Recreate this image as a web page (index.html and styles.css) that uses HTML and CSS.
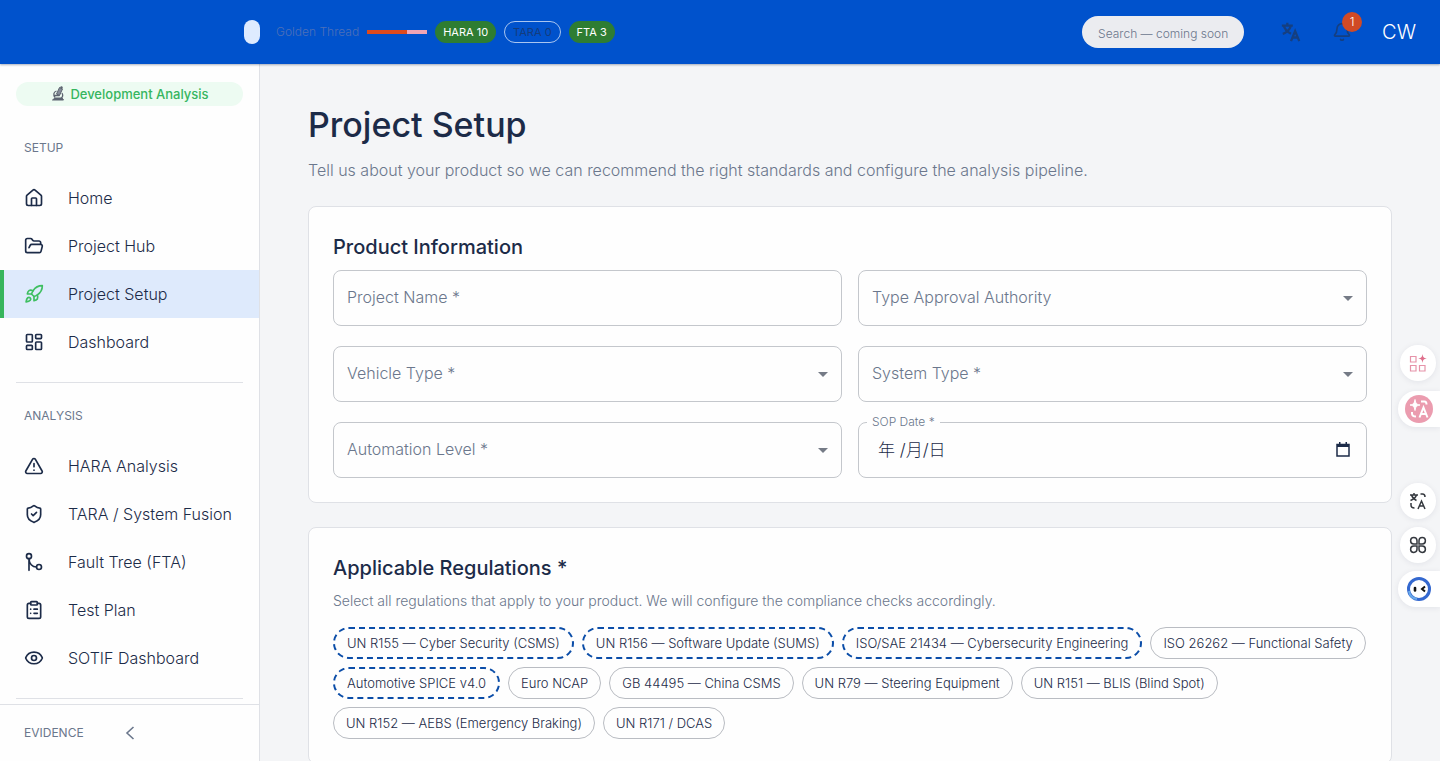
FILE: index.html
```html
<!DOCTYPE html>
<html lang="en">
<head>
<meta charset="utf-8">
<meta name="viewport" content="width=device-width, initial-scale=1">
<title>Project Setup</title>
<link rel="stylesheet" href="styles.css">
</head>
<body>
<div class="app">
  <header class="topbar">
    <div class="thread">
      <span class="thread-toggle"></span>
      <span class="thread-label">Golden Thread</span>
      <span class="thread-bar"><span class="thread-fill"></span></span>
      <span class="tag tag-done">HARA 10</span>
      <span class="tag tag-empty">TARA 0</span>
      <span class="tag tag-done">FTA 3</span>
    </div>
    <div class="tools">
      <input class="search" type="text" aria-label="Search" placeholder="Search — coming soon">
      <button class="tool translate" type="button" aria-label="Language">
        <svg viewBox="0 0 24 24" width="22" height="22" fill="none" stroke="currentColor" stroke-width="2.500"><path d="M2 5h12M8 2v3M4 5c1 4 4 7 8 9M12 5c-1 4-5 8-9 9M12 22l4.500-11 4.500 11M13.500 18h6"/></svg>
      </button>
      <button class="tool bell" type="button" aria-label="Notifications">
        <svg viewBox="0 0 24 24" width="20" height="20" fill="none" stroke="currentColor" stroke-width="2" stroke-linecap="round" stroke-linejoin="round"><path d="M10.300 21a2 2 0 0 0 3.400 0M3.300 15.300A1 1 0 0 0 4 17h16a1 1 0 0 0 .7-1.700C19.400 14 18 12.500 18 8A6 6 0 0 0 6 8c0 4.500-1.400 6-2.700 7.300"/></svg>
        <span class="badge">1</span>
      </button>
      <button class="user" type="button">CW</button>
    </div>
  </header>

  <div class="body">
    <aside class="sidebar">
      <div class="mode">
        <svg viewBox="0 0 16 16" width="16" height="16" fill="none" stroke="#5d6470"><path d="M9.500 1.500l3 1.400-3 6.600-3-1.400z" fill="#858c99"/><path d="M10.500 1l2 1" stroke-width="2"/><path d="M6.500 5C3.500 6 3 9 5 11.500M3.500 9.500h6M12 7c1.500 2.500.5 5-2 6" stroke-width="1.300"/><path d="M2.500 14h11l-1.500-2H5z" fill="#5d6470"/></svg>
        <span>Development Analysis</span>
      </div>
      <nav class="nav">
        <h2 class="nav-title">SETUP</h2>
        <a class="nav-item" href="#"><svg class="ico" viewBox="0 0 24 24"><path d="M15 21v-8a1 1 0 0 0-1-1h-4a1 1 0 0 0-1 1v8"/><path d="M3 10a2 2 0 0 1 .7-1.500l7-6a2 2 0 0 1 2.600 0l7 6A2 2 0 0 1 21 10v9a2 2 0 0 1-2 2H5a2 2 0 0 1-2-2z"/></svg>Home</a>
        <a class="nav-item" href="#"><svg class="ico" viewBox="0 0 24 24"><path d="m6 14 1.500-2.900A2 2 0 0 1 9.200 10H20a2 2 0 0 1 1.900 2.500l-1.500 6a2 2 0 0 1-2 1.500H4a2 2 0 0 1-2-2V5a2 2 0 0 1 2-2h3.900a2 2 0 0 1 1.700.9l.8 1.200a2 2 0 0 0 1.700.9H18a2 2 0 0 1 2 2v2"/></svg>Project Hub</a>
        <a class="nav-item active" href="#" aria-current="page"><svg class="ico" viewBox="0 0 24 24"><path d="M4.500 16.500c-1.500 1.300-2 5-2 5s3.700-.5 5-2c.7-.8.700-2.100-.1-2.900a2.200 2.200 0 0 0-2.900-.1zM12 15l-3-3a22 22 0 0 1 2-4A12.900 12.900 0 0 1 22 2c0 2.700-.8 7.500-6 11a22 22 0 0 1-4 2z"/><path d="M9 12H4s.5-3 2-4c1.600-1.100 5 0 5 0M12 15v5s3-.5 4-2c1.100-1.600 0-5 0-5"/></svg>Project Setup</a>
        <a class="nav-item" href="#"><svg class="ico" viewBox="0 0 24 24"><rect x="3" y="3" width="7" height="9" rx="1"/><rect x="14" y="3" width="7" height="5" rx="1"/><rect x="14" y="12" width="7" height="9" rx="1"/><rect x="3" y="16" width="7" height="5" rx="1"/></svg>Dashboard</a>
        <hr class="rule">
        <h2 class="nav-title">ANALYSIS</h2>
        <a class="nav-item" href="#"><svg class="ico" viewBox="0 0 24 24"><path d="m21.700 18-8-14a2 2 0 0 0-3.500 0l-8 14A2 2 0 0 0 4 21h16a2 2 0 0 0 1.700-3M12 9v4M12 17h.01"/></svg>HARA Analysis</a>
        <a class="nav-item" href="#"><svg class="ico" viewBox="0 0 24 24"><path d="M20 13c0 5-3.500 7.500-7.700 9a1 1 0 0 1-.6 0C7.500 20.500 4 18 4 13V6a1 1 0 0 1 1-1c2 0 4.500-1.200 6.200-2.700a1.200 1.200 0 0 1 1.600 0C14.500 3.800 17 5 19 5a1 1 0 0 1 1 1z"/><path d="m9 12 2 2 4-4"/></svg>TARA / System Fusion</a>
        <a class="nav-item" href="#"><svg class="ico" viewBox="0 0 24 24"><circle cx="6" cy="5" r="3"/><circle cx="18" cy="18" r="3"/><path d="M6 8v14M6 8c0 6 4 10 9 10"/></svg>Fault Tree (FTA)</a>
        <a class="nav-item" href="#"><svg class="ico" viewBox="0 0 24 24"><rect x="8" y="2" width="8" height="4" rx="1"/><path d="M16 4h2a2 2 0 0 1 2 2v14a2 2 0 0 1-2 2H6a2 2 0 0 1-2-2V6a2 2 0 0 1 2-2h2M12 11h4M12 16h4M8 11h.01M8 16h.01"/></svg>Test Plan</a>
        <a class="nav-item" href="#"><svg class="ico" viewBox="0 0 24 24"><path d="M2.100 12.300a1 1 0 0 1 0-.7 10.700 10.700 0 0 1 19.800 0 1 1 0 0 1 0 .7 10.700 10.700 0 0 1-19.800 0"/><circle cx="12" cy="12" r="3"/></svg>SOTIF Dashboard</a>
        <hr class="rule">
      </nav>
      <div class="sidebar-foot">
        <h2 class="foot-title">EVIDENCE</h2>
        <button class="collapse" type="button" aria-label="Collapse sidebar"><svg viewBox="0 0 12 16" width="12" height="16" fill="none" stroke="currentColor" stroke-width="1.600"><path d="M9.500 2 3 8l6.500 6"/></svg></button>
      </div>
    </aside>

    <main class="main">
      <h1 class="title">Project Setup</h1>
      <p class="subtitle">Tell us about your product so we can recommend the right standards and configure the analysis pipeline.</p>

      <section class="card">
        <h2 class="card-title">Product Information</h2>
        <form class="fields">
          <div class="field"><label for="name">Project Name *</label><input id="name" type="text"></div>
          <div class="field pick"><label for="authority">Type Approval Authority</label><select id="authority"><option></option></select></div>
          <div class="field pick"><label for="vehicle">Vehicle Type *</label><select id="vehicle"><option></option></select></div>
          <div class="field pick"><label for="system">System Type *</label><select id="system"><option></option></select></div>
          <div class="field pick"><label for="level">Automation Level *</label><select id="level"><option></option></select></div>
          <div class="field date"><label for="sop">SOP Date *</label><input id="sop" type="text" value="年 /月/日"><button class="calendar" type="button" aria-label="Open calendar"><svg viewBox="0 0 14 15" width="14" height="15"><path d="M1 2.500h12V14H1z" fill="none" stroke="currentColor" stroke-width="1.500"/><path d="M1 2h12v3H1zM3 0h1.500v3H3zM9.500 0H11v3H9.500z" fill="currentColor"/></svg></button></div>
        </form>
      </section>

      <section class="card">
        <h2 class="card-title">Applicable Regulations *</h2>
        <p class="hint">Select all regulations that apply to your product. We will configure the compliance checks accordingly.</p>
        <div class="chips">
          <button class="chip suggested" type="button">UN R155 — Cyber Security (CSMS)</button>
          <button class="chip suggested" type="button">UN R156 — Software Update (SUMS)</button>
          <button class="chip suggested" type="button">ISO/SAE 21434 — Cybersecurity Engineering</button>
          <button class="chip" type="button">ISO 26262 — Functional Safety</button>
          <button class="chip suggested" type="button">Automotive SPICE v4.0</button>
          <button class="chip" type="button">Euro NCAP</button>
          <button class="chip" type="button">GB 44495 — China CSMS</button>
          <button class="chip" type="button">UN R79 — Steering Equipment</button>
          <button class="chip" type="button">UN R151 — BLIS (Blind Spot)</button>
          <button class="chip" type="button">UN R152 — AEBS (Emergency Braking)</button>
          <button class="chip" type="button">UN R171 / DCAS</button>
        </div>
      </section>
    </main>
  </div>
</div>

<div class="dock dock-upper">
  <button class="float round" type="button" aria-label="Add app"><svg viewBox="0 0 18 18" width="18" height="18" fill="none" stroke="#e693a9" stroke-width="1.200"><path d="M1.500 2.500h5.500v5.500H1.500zM1.500 11.500h5.500V17H1.500zM10.500 11.500H16V17h-5.500z"/><path d="M13.500 0c.5 3.100 1.200 3.900 4.300 4.500-3.100.6-3.800 1.400-4.300 4.500-.5-3.100-1.200-3.900-4.300-4.500 3.100-.6 3.800-1.400 4.300-4.500z" fill="#df6f8c" stroke="none"/></svg></button>
  <button class="float tab" type="button" aria-label="Translate page"><svg viewBox="0 0 28 28" width="28" height="28"><circle cx="14" cy="14" r="14" fill="#eb9caf"/><path d="M10 4.500c.7 4 1.500 4.900 5 5.500-3.500.7-4.300 1.500-5 5.500-.7-4-1.500-4.800-5-5.500 3.500-.6 4.300-1.500 5-5.500z" fill="#fff" stroke="#fff"/><g fill="none" stroke="#fff" stroke-width="2"><path d="M16 6.500h3.500q2 0 2 3M7 17v1.500q0 3 4 3M14.500 22.500l4-10 4 10M16 19h5"/></g></svg></button>
</div>
<div class="dock dock-lower">
  <button class="float round" type="button" aria-label="Translate"><svg viewBox="0 0 18 18" width="18" height="18" fill="none" stroke="#35393f" stroke-width="1.500"><path d="M1 3h8M5 1v2M2.500 3q1 3.500 5 5.500M7.500 3q-1 3.500-6 5.500M11.500 2h2q2.500 0 2.500 3M2 11v2q0 3 3.500 3M9 17l3.500-8 3.500 8M10.500 14h4"/></svg></button>
  <button class="float round" type="button" aria-label="Apps"><svg viewBox="0 0 18 18" width="18" height="18" fill="none" stroke="#35393f" stroke-width="1.500"><path d="M8 8H4.700A3.200 3.200 0 1 1 8 4.700zM10 8V4.700A3.200 3.200 0 1 1 13.300 8zM8 10v3.300A3.200 3.200 0 1 1 4.700 10zM10 10h3.300a3.200 3.200 0 1 1-3.300 3.300z"/></svg></button>
  <button class="float tab" type="button" aria-label="Assistant"><svg viewBox="0 0 26 26" width="26" height="26"><circle cx="13" cy="13" r="10.500" fill="#fff" stroke="#3468cf" stroke-width="3"/><path d="M3 15q1 7 8 8" fill="none" stroke="#69a9e9" stroke-width="2"/><path d="M9 12v2.500" stroke="#111" stroke-width="2.600" stroke-linecap="round"/><path d="M19 10.500 16 13l3 2.500" fill="none" stroke="#111" stroke-width="2"/></svg></button>
</div>
</body>
</html>
```
FILE: styles.css
```css
* { box-sizing: border-box; }

body {
  margin: 0;
  background: #f4f5f7;
  color: #1c2b48;
  font: 300 16px/24px Inter, "Noto Sans CJK SC", sans-serif;
}

button, input, select { font: inherit; color: inherit; }
button { padding: 0; border: 0; background: none; cursor: pointer; }
h1, h2, p { margin: 0; }

.app { display: flex; flex-direction: column; height: 100vh; }

/* Top bar */
.topbar {
  display: flex;
  flex: none;
  align-items: center;
  justify-content: space-between;
  height: 64px;
  padding: 0 24px 0 244px;
  background: #0052cc;
  box-shadow: 0 1px 2px rgba(9, 30, 66, .35);
  z-index: 2;
}
.thread { display: flex; align-items: center; gap: 8px; font-size: 12px; white-space: nowrap; }
.thread-toggle { width: 16px; height: 24px; margin-right: 8px; border-radius: 8px; background: #deebff; }
.thread-label { color: #4e70b8; }
.thread-bar { width: 60px; height: 4px; background: #f0a5b5; }
.thread-fill { display: block; width: 66%; height: 4px; background: #de4a1c; }
.tag { height: 22px; padding: 0 8px; border-radius: 11px; font-size: 11px; line-height: 22px; }
.tag-done { background: #2e7d32; color: #fff; font-weight: 400; }
.tag-empty { border: 1px solid #a9c5f0; line-height: 20px; color: #143c7c; font-weight: 400; }
.tools { display: flex; align-items: center; }
.search {
  width: 162px;
  height: 32px;
  margin-right: 36px;
  padding: 3px 16px 0;
  border: 0;
  border-radius: 16px;
  background: #ebecf0;
  font-size: 12px;
}
.search::placeholder { color: #6b778c; opacity: 1; }
.tool { display: flex; color: #153f80; }
.translate { margin-right: 30px; }
.bell { position: relative; margin-right: 30px; }
.badge {
  position: absolute;
  top: -10px;
  left: 10px;
  width: 20px;
  height: 20px;
  border-radius: 10px;
  background: #d04a26;
  color: #fff;
  font-size: 12px;
  line-height: 20px;
}
.user { color: #fff; font-size: 20px; }

/* Sidebar */
.body { display: flex; flex: 1; min-height: 0; }
.sidebar {
  display: flex;
  flex: none;
  flex-direction: column;
  width: 260px;
  border-right: 1px solid #dfe1e6;
  background: #fefefe;
}
.mode {
  display: flex;
  flex: none;
  align-items: center;
  justify-content: center;
  gap: 4px;
  height: 24px;
  margin: 18px 16px 0;
  border-radius: 12px;
  background: #edfbf2;
  color: #36b65f;
  font-size: 13px;
  font-weight: 500;
}
.nav { flex: 1; min-height: 0; padding-top: 18px; overflow: hidden; }
.nav-title, .foot-title { color: #6b778c; font-size: 12px; font-weight: 400; }
.nav-title { padding: 0 24px; margin-bottom: 2px; line-height: 48px; }
.nav-item {
  display: flex;
  align-items: center;
  gap: 24px;
  height: 48px;
  padding-left: 24px;
  color: #1c2b48;
  text-decoration: none;
  white-space: nowrap;
}
.nav-item.active { border-left: 4px solid #36b55c; padding-left: 20px; background: #deeafc; }
.active .ico { color: #3fbf61; }
.ico {
  width: 20px;
  height: 20px;
  fill: none;
  stroke: currentColor;
  stroke-width: 2;
  stroke-linecap: round;
  stroke-linejoin: round;
}
.rule { height: 1px; margin: 16px 16px 9px; border: 0; background: #dfe1e6; }
.sidebar-foot {
  display: grid;
  flex: none;
  grid-template-columns: 1fr auto 1fr;
  align-items: center;
  height: 57px;
  padding-left: 24px;
  padding-right: 24px;
  border-top: 1px solid #dfe1e6;
}
.collapse { display: flex; color: #6b778c; }

/* Content */
.main { flex: 1; min-width: 0; padding: 40px 48px; overflow-y: auto; scrollbar-width: none; }
.title { font-size: 34px; line-height: 42px; font-weight: 500; }
.subtitle { margin: 12px 0 24px; color: #6b778c; }
.card {
  margin-bottom: 24px;
  padding: 24px;
  border: 1px solid #dfe1e6;
  border-radius: 8px;
  background: #fefefe;
}
.card-title { margin-bottom: 6px; font-size: 20px; line-height: 33px; font-weight: 500; }
.fields { display: grid; grid-template-columns: 1fr 1fr; gap: 20px 16px; }
.field { position: relative; display: flex; }
.field input, .field select {
  width: 100%;
  height: 56px;
  padding: 0 14px;
  border: 1px solid #c4c7cc;
  border-radius: 8px;
  background: none;
  appearance: none;
}
.field label { position: absolute; top: 15px; left: 14px; color: #6b778c; pointer-events: none; }
.pick::after {
  content: "";
  position: absolute;
  top: 26px;
  right: 14px;
  border: 5px solid transparent;
  border-top-color: #757b86;
  border-bottom: 0;
  pointer-events: none;
}
.field.date label { top: -8px; left: 9px; padding: 0 5px; background: #fefefe; font-size: 12px; line-height: 16px; }
.field.date input { padding: 0 19px 3px; font-size: 17px; }
.calendar { position: absolute; top: 20px; right: 17px; display: flex; }
.hint { margin-bottom: 16px; color: #6b778c; font-size: 14px; line-height: 20px; }
.chips { display: flex; flex-wrap: wrap; gap: 8px; }
.chip { height: 32px; padding: 0 12px; border: 1px solid #b9bcc2; border-radius: 16px; font-size: 13px; white-space: nowrap; }
.chip.suggested { border: 2px dashed #0b4da8; }

/* Floating tools */
.dock { position: fixed; right: 0; z-index: 3; display: flex; flex-direction: column; align-items: flex-end; }
.dock-upper { top: 345px; gap: 10px; }
.dock-lower { top: 483px; gap: 8px; }
.float { display: flex; align-items: center; justify-content: center; height: 36px; background: #fff; box-shadow: 0 1px 6px rgba(9, 30, 66, .08); }
.round { width: 36px; margin-right: 4px; border-radius: 18px; }
.tab { width: 42px; border-radius: 18px 0 0 18px; }
```
